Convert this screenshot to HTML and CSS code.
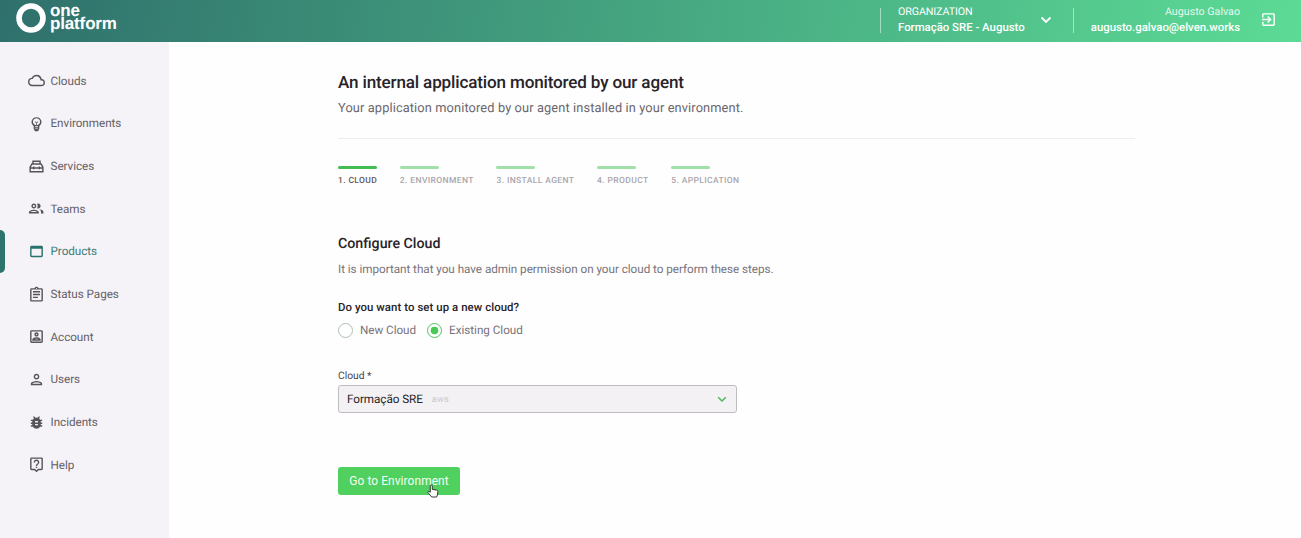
FILE: index.html
```html
<!DOCTYPE html>
<html lang="en">
<head>
<meta charset="utf-8">
<title>One Platform</title>
<link rel="stylesheet" href="styles.css">
</head>
<body>
<header class="topbar">
  <div class="brand">
    <svg class="brand-mark" viewBox="0 0 30 30"><circle cx="15" cy="15" r="12" fill="none" stroke="#fff" stroke-width="5.600"/></svg>
    <div class="brand-name"><span>one</span><span>platform</span></div>
  </div>
  <div class="org">
    <div class="org-text"><span class="org-label">ORGANIZATION</span><span class="org-name">Formação SRE - Augusto</span></div>
    <svg class="org-caret" viewBox="0 0 12 8"><path d="M1.500 1.500 6 6l4.500-4.500" fill="none" stroke="#fff" stroke-width="1.800"/></svg>
  </div>
  <div class="user">
    <div class="user-text"><span class="user-name">Augusto Galvao</span><span class="user-mail">augusto.galvao@elven.works</span></div>
    <svg class="icon logout" viewBox="0 0 24 24"><path d="M10.090 15.590 11.500 17l5-5-5-5-1.410 1.410L12.670 11H3v2h9.670l-2.580 2.590zM19 3H5a2 2 0 0 0-2 2v4h2V5h14v14H5v-4H3v4a2 2 0 0 0 2 2h14c1.100 0 2-.9 2-2V5c0-1.100-.9-2-2-2z"/></svg>
  </div>
</header>
<div class="shell">
  <nav class="sidebar">
    <a class="nav-item"><svg class="icon" viewBox="0 0 24 24"><path d="M19.350 10.040A7.490 7.490 0 0 0 12 4C9.110 4 6.600 5.640 5.350 8.040A5.994 5.994 0 0 0 0 14c0 3.310 2.690 6 6 6h13c2.760 0 5-2.240 5-5 0-2.640-2.050-4.780-4.650-4.960zM19 18H6c-2.210 0-4-1.790-4-4 0-2.050 1.530-3.760 3.560-3.970l1.070-.11.5-.95A5.469 5.469 0 0 1 12 6c2.620 0 4.880 1.860 5.390 4.430l.3 1.500 1.530.11A2.980 2.980 0 0 1 22 15c0 1.650-1.350 3-3 3z"/></svg><span>Clouds</span></a>
    <a class="nav-item"><svg class="icon" viewBox="0 0 24 24"><path d="M12 3a7 7 0 0 0-4 12.740V19c0 .74.4 1.380 1 1.720V21c0 1.100.9 2 2 2h2c1.100 0 2-.9 2-2v-.28c.6-.34 1-.98 1-1.720v-3.260A7 7 0 0 0 12 3zm2 16h-4v-1h4zm0-2h-4v-1h4zm-1.500-2.600v-2.750l2.100-2.100-.7-.7L12 10.750l-1.900-1.900-.7.7 2.100 2.100v2.750A5 5 0 1 1 12.500 14.400z" fill-rule="evenodd"/></svg><span>Environments</span></a>
    <a class="nav-item"><svg class="icon" viewBox="0 0 24 24" fill="none"><path d="M7 8V4.500h10V8M5.500 8.500h13L21 13v6.500H3V13zM3 14h18M8 12v4M16 12v4" fill="none" stroke="currentColor" stroke-width="2"/></svg><span>Services</span></a>
    <a class="nav-item"><svg class="icon teams" viewBox="0 0 24 24"><path d="M16.500 13.200C18.200 14 19 15.300 19 16.700V19h3.500v-2.300c0-2-3.500-3.200-6-3.500zM15 12c1.930 0 3.500-1.570 3.500-3.500S16.930 5 15 5c-.54 0-1.040.130-1.500.35a5.450 5.450 0 0 1 0 6.300c.46.220.96.350 1.500.350zM9 12c1.930 0 3.500-1.570 3.500-3.500S10.930 5 9 5 5.500 6.570 5.500 8.500 7.070 12 9 12zm0-5c.83 0 1.500.67 1.500 1.500S9.830 10 9 10s-1.500-.67-1.500-1.500S8.170 7 9 7zM9 13.700c-2.340 0-7 1.200-7 3.500V19h14v-1.800c0-2.300-4.660-3.500-7-3.500zM4.340 17c.84-.6 2.870-1.300 4.660-1.300s3.820.7 4.660 1.300z"/></svg><span>Teams</span></a>
    <a class="nav-item active"><svg class="icon" viewBox="0 0 24 24"><path d="M19 4H5a2 2 0 0 0-2 2v12a2 2 0 0 0 2 2h14c1.100 0 2-.9 2-2V6a2 2 0 0 0-2-2zm0 14H5V8h14z"/></svg><span>Products</span></a>
    <a class="nav-item"><svg class="icon" viewBox="0 0 24 24"><path d="M7 15h7v2H7zm0-4h10v2H7zm0-4h10v2H7zM19 3h-4.180C14.400 1.840 13.300 1 12 1s-2.400.84-2.820 2H5a2 2 0 0 0-2 2v15c0 1.100.9 2 2 2h14c1.100 0 2-.9 2-2V5c0-1.100-.9-2-2-2zm-7-.25c.41 0 .75.34.75.75s-.34.75-.75.75-.75-.34-.75-.75.34-.75.75-.75zM19 20H5V5h14z"/></svg><span>Status Pages</span></a>
    <a class="nav-item"><svg class="icon" viewBox="0 0 24 24"><path d="M19 3H5a2 2 0 0 0-2 2v14c0 1.100.9 2 2 2h14c1.100 0 2-.9 2-2V5c0-1.100-.9-2-2-2zm0 16H5V5h14zM12 12c1.650 0 3-1.350 3-3s-1.350-3-3-3-3 1.350-3 3 1.350 3 3 3zm0-4c.55 0 1 .45 1 1s-.45 1-1 1-1-.45-1-1 .45-1 1-1zM18 16.580c0-2.500-3.970-3.580-6-3.580s-6 1.080-6 3.580V18h12zM8.480 16c.69-.56 2.380-1 3.520-1s2.840.44 3.520 1z"/></svg><span>Account</span></a>
    <a class="nav-item"><svg class="icon" viewBox="0 0 24 24"><path d="M12 6c1.100 0 2 .9 2 2s-.9 2-2 2-2-.9-2-2 .9-2 2-2m0 10c2.700 0 5.800 1.290 6 2H6c.23-.72 3.310-2 6-2m0-12C9.790 4 8 5.790 8 8s1.790 4 4 4 4-1.790 4-4-1.790-4-4-4zm0 10c-2.670 0-8 1.340-8 4v2h16v-2c0-2.660-5.330-4-8-4z"/></svg><span>Users</span></a>
    <a class="nav-item"><svg class="icon" viewBox="0 0 24 24"><path d="M20 8h-2.810a5.985 5.985 0 0 0-1.820-1.960L17 4.410 15.590 3l-2.170 2.170a6.002 6.002 0 0 0-2.830 0L8.410 3 7 4.410l1.620 1.630C7.880 6.550 7.260 7.220 6.810 8H4v2h2.090c-.05.33-.09.66-.09 1v1H4v2h2v1c0 .34.040.67.090 1H4v2h2.810a5.990 5.990 0 0 0 10.380 0H20v-2h-2.090c.05-.33.090-.66.090-1v-1h2v-2h-2v-1c0-.34-.04-.67-.09-1H20zm-6 8h-4v-2h4zm0-4h-4v-2h4z"/></svg><span>Incidents</span></a>
    <a class="nav-item"><svg class="icon" viewBox="0 0 24 24"><path d="M19 2H5a2 2 0 0 0-2 2v14a2 2 0 0 0 2 2h4l3 3 3-3h4c1.100 0 2-.9 2-2V4c0-1.100-.9-2-2-2zm0 16h-4.830L12 20.170 9.830 18H5V4h14zM11 15h2v2h-2zM12 7c1.100 0 2 .9 2 2 0 2-3 1.750-3 5h2c0-2.250 3-2.500 3-5 0-2.210-1.790-4-4-4S8 6.790 8 9h2c0-1.100.9-2 2-2z"/></svg><span>Help</span></a>
  </nav>
  <main class="content">
    <h1 class="title">An internal application monitored by our agent</h1>
    <p class="subtitle">Your application monitored by our agent installed in your environment.</p>
    <ol class="steps">
      <li class="step current">1. CLOUD</li>
      <li class="step">2. ENVIRONMENT</li>
      <li class="step">3. INSTALL AGENT</li>
      <li class="step">4. PRODUCT</li>
      <li class="step">5. APPLICATION</li>
    </ol>
    <h2 class="section-title">Configure Cloud</h2>
    <p class="hint">It is important that you have admin permission on your cloud to perform these steps.</p>
    <p class="question">Do you want to set up a new cloud?</p>
    <div class="radios">
      <span class="radio"></span><span class="radio-label">New Cloud</span>
      <span class="radio checked"></span><span class="radio-label">Existing Cloud</span>
    </div>
    <div class="field-label">Cloud *</div>
    <div class="select">
      <span class="select-value">Formação SRE</span><span class="select-tag">aws</span>
      <svg class="select-caret" viewBox="0 0 10 7"><path d="M1.200 1.200 5 5l3.800-3.800" fill="none" stroke="#4cb95c" stroke-width="1.500"/></svg>
    </div>
    <button class="submit">Go to Environment
      <svg class="pointer" viewBox="0 0 12 14"><path d="M3.300 8.300V2.100a1 1 0 0 1 2 0v3.300l4.300.7c.9.2 1.400.7 1.300 1.600l-.5 3.300-.8 2H4.700L1 8.700c-.6-.8.5-1.700 1.300-1.100z" fill="#fff" stroke="#222" stroke-width=".9" stroke-linejoin="round"/></svg>
    </button>
  </main>
</div>
</body>
</html>
```
FILE: styles.css
```css
* { box-sizing: border-box; }
body {
  margin: 0;
  height: 538px;
  overflow: hidden;
  display: flex;
  flex-direction: column;
  background: #fefefe;
  font-family: Roboto, "Liberation Sans", sans-serif;
  text-rendering: geometricPrecision;
  color: #272329;
}
h1, h2, p, ol { margin: 0; padding: 0; font-weight: 400; }
span, h1, h2, p, li { white-space: nowrap; }
.icon { width: 17px; height: 17px; fill: currentColor; flex: none; }
.teams { transform: translateX(-.5px); }

.topbar {
  height: 42.400px;
  flex: none;
  display: flex;
  color: #fff;
  background: linear-gradient(100deg, #2f706c 0%, #5cdb95 100%);
}
.brand { display: flex; padding: 3px 0 0 16px; margin-right: auto; }
.brand-mark { width: 30px; height: 30px; }
.brand-name {
  display: flex;
  flex-direction: column;
  margin: 1px 0 0 4px;
  font: 700 17px/13px "Liberation Sans", sans-serif;
  letter-spacing: -0.15px;
}
.org, .user { height: 25px; margin-top: 8px; display: flex; border-left: 1px solid rgba(255, 255, 255, .5); }
.org { width: 193px; padding-left: 17px; }
.org-text, .user-text { display: flex; flex-direction: column; margin-top: -3px; font-size: 11.400px; line-height: 14.500px; }
.org-text { width: 128px; }
.org-label { font-size: 10.700px; letter-spacing: -.1px; }
.org-name, .user-mail { font-weight: 500; letter-spacing: 0; }
.org-caret { width: 12px; height: 8px; margin: 8px 0 0 14px; }
.user { width: 228px; }
.user-text { width: 166px; align-items: flex-end; }
.user-name { font-size: 10.700px; opacity: .85; }
.logout { margin: 3px 0 0 20px; }

.shell { flex: 1; display: flex; min-height: 0; }
.sidebar { width: 169px; padding-top: 17.100px; background: #f5f3f7; }
.nav-item {
  height: 42.670px;
  display: flex;
  align-items: center;
  padding-left: 27.500px;
  gap: 6px;
  font-size: 11.700px;
  letter-spacing: -.04px;
  color: #656067;
}
.nav-item .icon { color: #58535b; }
.nav-item.active { color: #3d7b76; padding-left: 0; }
.nav-item.active .icon { color: #27736b; }
.active::before { content: ""; width: 5px; height: 43px; border-radius: 0 5px 5px 0; background: #2f746c; margin-right: 16.500px; }

.content { width: 966px; padding: 28.600px 0 0 169px; }
.title { font-size: 17.070px; line-height: 24px; font-weight: 500; letter-spacing: -.15px; }
.subtitle { height: 41px; margin-top: 3px; font-size: 12.800px; line-height: 21px; letter-spacing: .12px; color: #6b666d; border-bottom: 1px solid #efedf0; }
.steps { display: flex; gap: 22.700px; margin-top: 27px; list-style: none; }
.step { font-size: 8.530px; line-height: 12px; font-weight: 500; letter-spacing: .37px; color: #aaa6ac; }
.step::before { content: ""; display: block; width: 39px; height: 3px; margin-bottom: 6px; border-radius: 2px; background: #a1e0a8; }
.current { color: #5d585f; }
.current::before { background: #43bd52; }
.section-title { margin-top: 47px; font-size: 14.220px; line-height: 20px; font-weight: 500; }
.hint { margin-top: 7px; font-size: 11.700px; line-height: 16px; letter-spacing: -.03px; color: #78737a; }
.question { margin-top: 22px; font-size: 11.400px; line-height: 16px; font-weight: 500; letter-spacing: .07px; }
.radios { display: flex; align-items: center; height: 16px; margin-top: 7.500px; }
.radio { width: 15px; height: 15px; flex: none; border: 1px solid #aebfb3; border-radius: 50%; background: #fff; }
.radio-label { margin: 0 11px 0 7px; font-size: 11.700px; letter-spacing: -.03px; color: #78737a; }
.checked { border: 1.500px solid #50c45f; background: radial-gradient(circle, #48c958 3.500px, #fff 4.200px); }
.field-label { margin-top: 31px; font-size: 10.300px; line-height: 14px; color: #49444b; }
.select { display: flex; align-items: center; width: 398.500px; height: 28.500px; margin-top: 1.500px; padding: 0 9px 1px 8px; border: 1px solid #bfbcc0; border-radius: 3px; background: #f3f1f3; }
.select-value { font-size: 11.700px; letter-spacing: -.05px; }
.select-tag { margin: 2px 0 0 9px; font-size: 9px; letter-spacing: .3px; color: #cbc8cc; }
.select-caret { width: 10px; height: 7px; margin: 2px 0 0 auto; }
.submit { position: relative; display: block; width: 122px; height: 28.500px; margin-top: 53.500px; padding: 0; border: 0; border-radius: 3px; background: #50d05f; color: #f3fff4; font: 400 11.900px Roboto, sans-serif; letter-spacing: .1px; white-space: nowrap; }
.pointer { position: absolute; left: 89px; top: 17px; width: 12px; height: 14px; }
```
